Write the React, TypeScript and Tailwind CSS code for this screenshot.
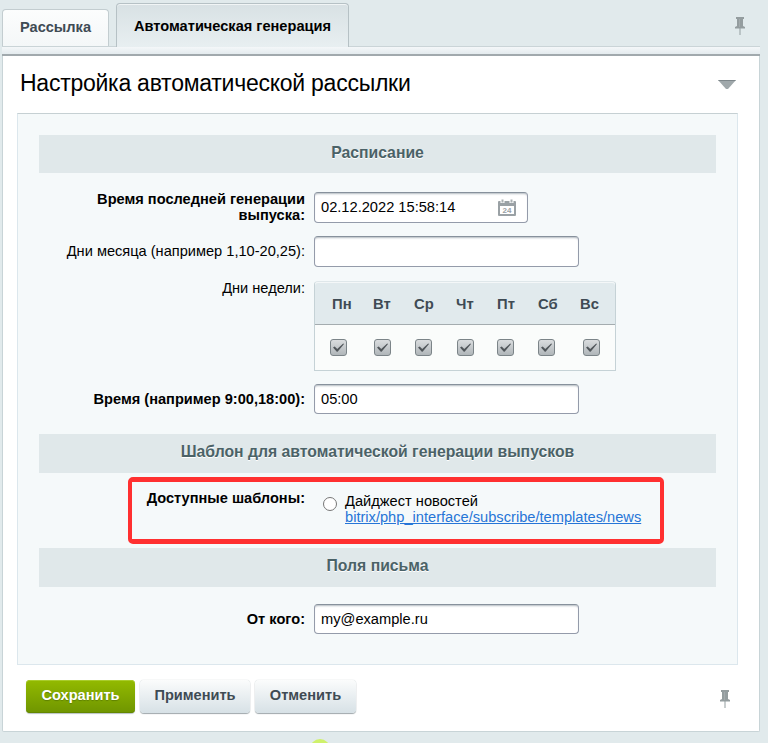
import React from 'react';

const days = [
  { name: 'Пн', label: 'ml-[17px]', box: 'ml-[15px]' },
  { name: 'Вт', label: 'ml-[22px]', box: 'ml-[27px]' },
  { name: 'Ср', label: 'ml-[22px]', box: 'ml-[24px]' },
  { name: 'Чт', label: 'ml-[23px]', box: 'ml-[25px]' },
  { name: 'Пт', label: 'ml-[22px]', box: 'ml-[23px]' },
  { name: 'Сб', label: 'ml-[22px]', box: 'ml-[24px]' },
  { name: 'Вс', label: 'ml-[23px]', box: 'ml-[28px]' },
];

const Pin: React.FC = () => (
  <svg width="12" height="20" viewBox="0 0 12 20" fill="#949d9f" className="shrink-0">
    <path d="M2 1h8v2H9v7l2 1v1.500H1V11l2-1V3H2z" />
    <path d="M5.500 12h1v7h-1z" />
    <path d="M5 3h1v8H5z" fill="#a3abad" />
  </svg>
);

const CalendarIcon: React.FC = () => (
  <svg width="18" height="18" viewBox="0 0 18 18" className="shrink-0">
    <path d="M0 3a1 1 0 0 1 1-1h1.500v2h4V2h5v2h4V2H17a1 1 0 0 1 1 1V16a1 1 0 0 1-1 1H1a1 1 0 0 1-1-1z" fill="#9aa1a5" />
    <path d="M3.500.5h2v3h-2zM12.500.5h2v3h-2z" fill="#a9afb2" />
    <path d="M2 7h14v8H2z" fill="#fff" />
    <text x="9" y="14" textAnchor="middle" fontSize="8" fontWeight="bold" fontFamily="Liberation Sans, sans-serif" fill="#9aa1a5">24</text>
  </svg>
);

const Checkbox: React.FC<{ className: string }> = ({ className }) => (
  <span className={`${className} flex size-[17px] shrink-0 items-center justify-center rounded-[3px] border border-[#7b8488] bg-linear-to-b from-[#dadddf] to-[#b0b6b9]`}>
    <svg width="13" height="13" viewBox="0 0 13 13" fill="#50565a">
      <path d="M1 6.500 2.700 5.500 5.200 8 11.200 2.500 12 3 5.600 10.800H4.800z" />
    </svg>
  </span>
);

const SectionTitle: React.FC<{ className: string; children: React.ReactNode }> = ({ className, children }) => (
  <div className={`${className} flex items-start justify-center bg-[#e0e8ea] text-[15.75px] leading-[18px] font-bold text-[#4b6267] [text-shadow:0_1px_#ffffff]`}>
    {children}
  </div>
);

const Field: React.FC<{ className: string; children?: React.ReactNode }> = ({ className, children }) => (
  <div className={`${className} flex shrink-0 items-center rounded-[4px] border border-[#949baa] border-t-[#87919c] bg-white pl-[6px] text-[14.65px] leading-[17px] shadow-[inset_0_2px_2px_-1px_#b4bbc1]`}>
    {children}
  </div>
);

const App: React.FC = () => {
  return (
    <div className="h-[743px] w-[768px] overflow-hidden bg-[#e1eaec] font-['Liberation_Sans',Arial,sans-serif] text-[14.6px] text-black">
      {/* tabs */}
      <div className="flex h-[46px] items-end pl-[2px]">
        <div className="h-[37px] w-[107px] rounded-t-[4px] border border-b-0 border-[#c3cdd0] bg-linear-to-b from-[#fcfdfd] to-[#f4f7f8] pt-[8px] text-center text-[14.6px] leading-[18px] font-bold text-[#3f4b54]">
          Рассылка
        </div>
        <div className="relative z-10 -mb-px ml-[7px] h-[44px] w-[233px] rounded-t-[4px] border border-b-0 border-[#b6c1c5] bg-linear-to-b from-[#d8e1e4] to-[#e8eff1] pt-[13px] text-center text-[14.6px] leading-[18px] font-bold shadow-[inset_0_1px_#f1f5f6]">
          Автоматическая генерация
        </div>
        <div className="mr-[22px] mb-[10px] ml-auto">
          <Pin />
        </div>
      </div>
      <div className="ml-[2px] h-[10px] w-[758px] border-t border-b-2 border-t-[#cad4d7] border-b-[#a1a9ad] bg-linear-to-b from-[#f4f7f9] to-[#e4ebee]" />

      <div className="ml-[2px] flex h-[676px] w-[758px] flex-col rounded-b-[2px] border border-t-0 border-[#c8d4d7] bg-white">
        <div className="flex h-[57px] items-start justify-between pr-[22px] pl-[17px]">
          <h1 className="pt-[13px] text-[23px] leading-[28px] tracking-[-0.25px] whitespace-nowrap">Настройка автоматической рассылки</h1>
          <svg width="20" height="11" viewBox="0 0 20 11" className="mt-[23px]">
            <path d="M1 1h18l-8 9H9z" fill="#a0a8ab" />
            <path d="M1 1h18l-1 1H2z" fill="#7e878b" />
          </svg>
        </div>

        <div className="ml-[14px] h-[552px] w-[721px] border border-[#dce7ed] border-t-[#c6d0d3] bg-[#f5f9fa] px-[21px] pt-[21px]">
          <SectionTitle className="h-[38px] pt-[9px]">Расписание</SectionTitle>

          <div className="mt-[19px] flex gap-[9px]">
            <div className="-mt-px h-[32px] w-[266px] text-right leading-[16px] font-bold">
              Время последней генерации
              <br />
              выпуска:
            </div>
            <Field className="h-[31px] w-[214px] justify-between pr-[11px]">
              02.12.2022 15:58:14
              <CalendarIcon />
            </Field>
          </div>

          <div className="mt-[13px] flex gap-[9px]">
            <div className="w-[266px] pt-[7px] text-right leading-[16px] whitespace-nowrap">Дни месяца (например 1,10-20,25):</div>
            <Field className="h-[31px] w-[265px]" />
          </div>

          <div className="mt-[14px] flex gap-[9px]">
            <div className="-mt-px w-[266px] text-right leading-[16px]">Дни недели:</div>
            <div className="h-[90px] w-[302px] rounded-t-[4px] border border-[#c5d2d6] border-t-[#dfe7ea] bg-[#fafcfb]">
              <div className="flex h-[43px] items-center rounded-t-[3px] border-b border-[#a4acaf] bg-[#e1eaed] pt-[2px] text-[14.8px] font-bold text-[#3f4b54] shadow-[inset_0_1px_#f4f7f8]">
                {days.map((day) => (
                  <span key={day.name} className={`${day.label} w-[19px] whitespace-nowrap`}>{day.name}</span>
                ))}
              </div>
              <div className="flex h-[45px] items-center">
                {days.map((day) => (
                  <Checkbox key={day.name} className={day.box} />
                ))}
              </div>
            </div>
          </div>

          <div className="mt-[13px] flex items-center gap-[9px]">
            <div className="w-[266px] text-right leading-[16px] font-bold whitespace-nowrap">Время (например 9:00,18:00):</div>
            <Field className="h-[30px] w-[265px]">05:00</Field>
          </div>

          <SectionTitle className="mt-[20px] h-[39px] pt-[9px]">Шаблон для автоматической генерации выпусков</SectionTitle>

          <div className="mt-[4px] ml-[89px] flex h-[67px] w-[536px] rounded-[5px] border-4 border-t-5 border-b-5 border-[#ff3030] pt-[8px]">
            <div className="w-[173px] text-right leading-[16px] font-bold whitespace-nowrap">Доступные шаблоны:</div>
            <span className="mt-[7px] ml-[18px] size-[14px] shrink-0 rounded-full border border-[#767676] bg-white" />
            <div className="mt-[3px] ml-[8px] text-[14.65px] leading-[16px] whitespace-nowrap">
              Дайджест новостей
              <br />
              <a href="#" className="text-[#2675d7] underline">bitrix/php_interface/subscribe/templates/news</a>
            </div>
          </div>

          <SectionTitle className="mt-[4px] h-[39px] pt-[9px]">Поля письма</SectionTitle>

          <div className="mt-[17px] flex items-center gap-[9px]">
            <div className="w-[266px] text-right leading-[16px] font-bold">От кого:</div>
            <Field className="h-[30px] w-[265px]">my@example.ru</Field>
          </div>
        </div>

        <div className="mt-[15px] flex items-start pr-[28px] pl-[23px] text-[14.6px] leading-[18px] font-bold">
          <button className="h-[33px] w-[109px] rounded-[4px] bg-linear-to-b from-[#93ba00] to-[#6f9500] pb-[3px] text-white shadow-[inset_0_1px_#a9cc2c,inset_0_-1px_#648700,0_1px_1px_#b9c1c4] [text-shadow:0_1px_1px_#5f8000]">
            Сохранить
          </button>
          <button className="ml-[5px] h-[33px] w-[110px] rounded-[4px] bg-linear-to-b from-[#fbfcfc] to-[#d7e1e6] pb-[3px] text-[#3f4b54] shadow-[0_0_1px_#aeb7bb,0_1px_1px_#9fa7ab]">
            Применить
          </button>
          <button className="ml-[5px] h-[33px] w-[101px] rounded-[4px] bg-linear-to-b from-[#fbfcfc] to-[#d7e1e6] pb-[3px] text-[#3f4b54] shadow-[0_0_1px_#aeb7bb,0_1px_1px_#9fa7ab]">
            Отменить
          </button>
          <div className="mt-[9px] ml-auto">
            <Pin />
          </div>
        </div>
      </div>

      <div className="mt-[7px] ml-[310px] size-[20px] rounded-full bg-[#cff16b]" />
    </div>
  );
};

export default App;
